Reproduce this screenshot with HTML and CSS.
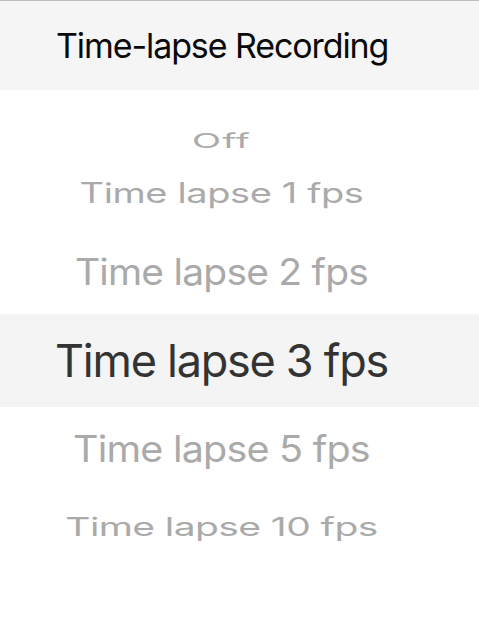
FILE: index.html
```html
<!DOCTYPE html>
<html lang="en">
<head>
<meta charset="utf-8">
<title>Time-lapse Recording</title>
<link rel="stylesheet" href="styles.css">
</head>
<body>
<div class="screen">
  <header class="header">
    <h1 class="title">Time-lapse Recording</h1>
  </header>
  <div class="picker">
    <div class="row row-off"><span class="label label-off">Off</span></div>
    <div class="row row-1"><span class="label label-1">Time lapse 1 fps</span></div>
    <div class="row row-2"><span class="label label-2">Time lapse 2 fps</span></div>
    <div class="row row-3 selected"><span class="label label-3">Time lapse 3 fps</span></div>
    <div class="row row-5"><span class="label label-5">Time lapse 5 fps</span></div>
    <div class="row row-10"><span class="label label-10">Time lapse 10 fps</span></div>
  </div>
</div>
</body>
</html>
```
FILE: styles.css
```css
html, body {
  margin: 0;
  padding: 0;
  background: #ffffff;
}
body {
  font-family: "Inter", "Liberation Sans", sans-serif;
  width: 479px;
  height: 621px;
  overflow: hidden;
}
.screen {
  display: flex;
  flex-direction: column;
}
.header {
  height: 89px;
  border-top: 1px solid #bdbdbd;
  background: #f5f5f5;
  display: flex;
  align-items: center;
  padding-left: 56px;
}
.title {
  margin: 0;
  font-size: 34px;
  font-weight: 400;
  line-height: 1;
  color: #0a0a0a;
  letter-spacing: -0.032em;
}
.picker {
  display: flex;
  flex-direction: column;
  padding-top: 34px;
}
.row {
  display: flex;
  align-items: center;
  justify-content: center;
  padding-right: 36px;
}
.label {
  display: block;
  line-height: 1;
  color: #aaaaaa;
  white-space: nowrap;
  font-weight: 400;
}
.row-off { height: 33px; }
.row-1 { height: 72px; }
.row-2 { height: 85px; }
.row-3 { height: 93px; }
.row-5 { height: 86px; }
.row-10 { height: 66px; }
.selected {
  background: #f4f4f4;
}
.label-3 {
  font-size: 45px;
  color: #333333;
  letter-spacing: -0.028em;
}
.label-off {
  font-size: 38px;
  letter-spacing: 0.03em;
  transform: scaleY(0.53);
}
.label-1 {
  font-size: 38px;
  letter-spacing: -0.01em;
  transform: scaleY(0.73);
}
.label-2 {
  font-size: 39px;
  letter-spacing: -0.02em;
  transform: scaleY(0.95);
}
.label-5 {
  font-size: 39.5px;
  letter-spacing: -0.02em;
  transform: scaleY(0.92);
}
.label-10 {
  font-size: 39px;
  letter-spacing: -0.015em;
  transform: scaleY(0.66);
}
```
